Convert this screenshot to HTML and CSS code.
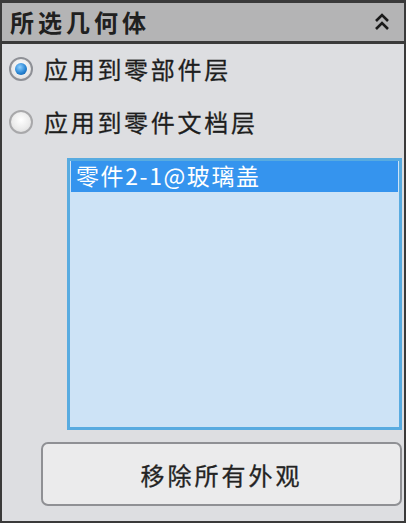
FILE: index.html
```html
<!DOCTYPE HTML>
<html>
<head>
    <meta charset="utf-8">
    <title>所选几何体</title>
    <link rel="stylesheet" href="styles.css">
</head>
<body>
    <div class="panel">
        <div class="head">
            <span class="title">所选几何体</span>
            <svg class="fold" width="16" height="20" viewBox="0 0 16 20">
                <path d="M2 9 L8 3 L14 9" fill="none" stroke="#1a1a1a" stroke-width="2.6"/>
                <path d="M2 17 L8 11 L14 17" fill="none" stroke="#1a1a1a" stroke-width="2.6"/>
            </svg>
        </div>
        <div class="body">
            <label class="opt">
                <span class="radio on"><span class="dot"></span></span>
                <span class="txt">应用到零部件层</span>
            </label>
            <label class="opt">
                <span class="radio"></span>
                <span class="txt">应用到零件文档层</span>
            </label>
            <div class="list">
                <div class="item sel">零件2-1@玻璃盖</div>
            </div>
            <div class="btn">移除所有外观</div>
        </div>
    </div>
</body>
</html>
```

FILE: styles.css
```css
html, body{
    margin:0;
    padding:0;
    background:#ffffff;
}
*{
    box-sizing:border-box;
}
.panel{
    width:406px;
    height:523px;
    border:2px solid #3a3a3a;
    border-top-width:3px;
    background:#dddee1;
    display:flex;
    flex-direction:column;
    font-family:"Noto Sans CJK SC", "Liberation Sans", sans-serif;
    color:#1e1e1e;
}
.head{
    height:41px;
    background:#b4b4b5;
    border-bottom:3px solid #3a3a3a;
    display:flex;
    align-items:center;
    justify-content:space-between;
    padding:0 14px 0 8px;
}
.title{
    font-size:24px;
    font-weight:bold;
    letter-spacing:4px;
    line-height:1;
    color:#202020;
}
.body{
    flex:1;
    display:flex;
    flex-direction:column;
    padding:10px 2px 0 7px;
}
.opt{
    display:flex;
    align-items:center;
    height:30px;
    margin-bottom:23px;
}
.radio{
    width:24px;
    height:24px;
    border-radius:50%;
    border:2px solid #a8a8aa;
    background:radial-gradient(circle at 50% 40%, #ffffff 0%, #eaeaea 60%, #d2d2d4 100%);
    display:flex;
    align-items:center;
    justify-content:center;
    margin-right:11px;
}
.radio.on{
    border-color:#8e9096;
}
.dot{
    width:12px;
    height:12px;
    border-radius:50%;
    background:radial-gradient(circle at 40% 35%, #8fd0ff 0%, #2a86d4 55%, #0b4f96 100%);
}
.txt{
    font-size:24px;
    letter-spacing:2.7px;
    line-height:1;
    -webkit-text-stroke:0.3px #1e1e1e;
}
.list{
    margin:-2px 0 0 58px;
    height:272px;
    border:3px solid #58abe0;
    background:#cde3f6;
    padding:0 1px;
}
.item{
    height:31px;
    font-size:23px;
    line-height:29px;
    padding-left:5px;
    letter-spacing:1.6px;
}
.item.sel{
    background:#3594ee;
    color:#ffffff;
}
.btn{
    margin:12px 0 0 32px;
    height:64px;
    border:2px solid #8f9094;
    border-radius:7px;
    background:#ebebec;
    display:flex;
    align-items:center;
    justify-content:center;
    font-size:24px;
    letter-spacing:3px;
    color:#232323;
    -webkit-text-stroke:0.3px #232323;
}
```
